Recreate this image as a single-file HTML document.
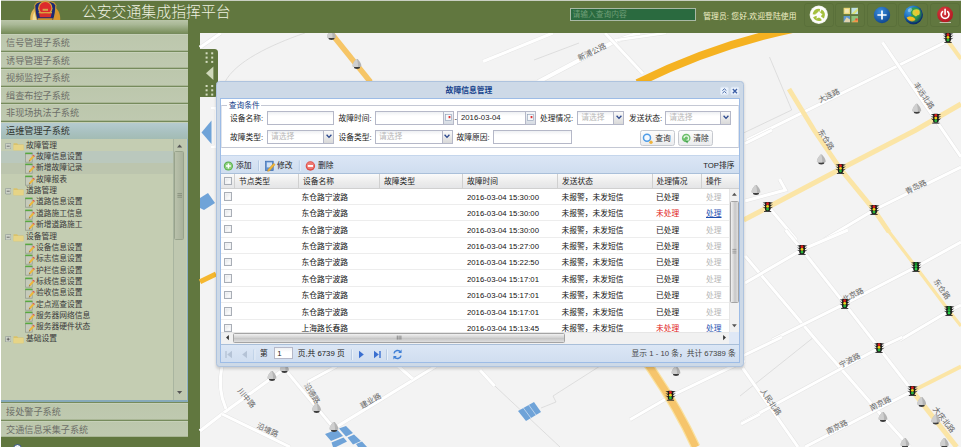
<!DOCTYPE html><html lang="zh"><head><meta charset="utf-8"><title>公安交通集成指挥平台</title><style>
*{margin:0;padding:0;box-sizing:border-box}
html,body{width:961px;height:447px;overflow:hidden;background:#61773f;font-family:"Liberation Sans","Noto Sans CJK SC",sans-serif}
.a{position:absolute}
.t{position:absolute;white-space:nowrap;line-height:1}
#hdr{left:0;top:0;width:961px;height:33px;background:#61773f}
#map{left:200px;top:33px;width:761px;height:414px;background:#f3f3f3;overflow:hidden}
.acc{position:absolute;left:1px;width:186.500px;height:17.6px;background:linear-gradient(#bcc7ac,#bfc9b0);border-top:1px solid #768b5c;box-shadow:inset 0 1px 0 #c6d0b8,inset 0 -1px 0 #a9b695}
.acc span{position:absolute;left:5px;top:5.1px;font-size:9.15px;line-height:1;color:#6d6f68;white-space:nowrap}
.tr{position:absolute;left:0;width:172px;height:11.36px}
.tr span{position:absolute;top:1.6px;font-size:7.75px;line-height:1;color:#3a3a3a;white-space:nowrap}
.lbl{position:absolute;font-size:7.75px;line-height:1;color:#222;white-space:nowrap}
.inp{position:absolute;height:14.600px;margin-top:-0.600px;border:1px solid #b5b8c8;background:linear-gradient(#eef0f3,#fff 4px);}
.ph{position:absolute;left:3px;top:2.4px;font-size:7.75px;line-height:1;color:#b8b8b8;white-space:nowrap}
.trg{position:absolute;right:-1px;top:-1px;width:11px;height:14px;border:1px solid #b5b8c8;background:linear-gradient(#fafafa,#d9d9d9)}
.row{position:absolute;left:0;width:510px;height:16.46px;border-bottom:1px solid #ededed;background:#fff}
.row span{position:absolute;top:5.5px;font-size:7.75px;line-height:1;color:#111;white-space:nowrap}
.cb{position:absolute;left:2.6px;top:4px;width:8.4px;height:8.4px;border:1px solid #a9aeb6;background:linear-gradient(135deg,#dfe2e5,#fbfbfb 70%);box-shadow:inset 0 0 0 1px #f1f2f4}
.hc{position:absolute;top:0;height:14px;border-right:1px solid #d0d0d0;}
.hc span{position:absolute;left:4px;top:3.9px;font-size:7.75px;line-height:1;color:#222;white-space:nowrap}
.rl{font-size:7.6px;fill:#666;font-family:"Liberation Sans","Noto Sans CJK SC",sans-serif}
</style></head><body>
<svg class="a" style="left:0;top:0" width="961" height="447" viewBox="0 0 961 447"><rect x="200" y="33" width="761" height="414" fill="#f3f3f3"/><path d="M305,33C270,45 235,62 225,82" stroke="#d4d4d4" fill="none" stroke-width="0.7"/><path d="M769.5,57L791.7,110L740,134.7" stroke="#d4d4d4" fill="none" stroke-width="0.7"/><path d="M740,396L814,337" stroke="#d4d4d4" fill="none" stroke-width="0.7"/><path d="M480,372L560,447M541,408L556,402L553,396L600,366" stroke="#d4d4d4" fill="none" stroke-width="0.7"/><path d="M534,60L579,43" stroke="#d4d4d4" fill="none" stroke-width="0.7"/><path d="M200,47.5L221,33" stroke="#e4e4e4" stroke-width="4.0" fill="none"/><path d="M200,47.5L221,33" stroke="#fff" stroke-width="3.0" fill="none"/><path d="M483,61.5L553,33" stroke="#e4e4e4" stroke-width="4.0" fill="none"/><path d="M483,61.5L553,33" stroke="#fff" stroke-width="3.0" fill="none"/><path d="M538,82L614,41.7L640,33" stroke="#e4e4e4" stroke-width="5.0" fill="none"/><path d="M538,82L614,41.7L640,33" stroke="#fff" stroke-width="4.0" fill="none"/><path d="M605,33L643,73.7" stroke="#e4e4e4" stroke-width="4.0" fill="none"/><path d="M605,33L643,73.7" stroke="#fff" stroke-width="3.0" fill="none"/><path d="M617,40L666,33" stroke="#e4e4e4" stroke-width="3.5" fill="none"/><path d="M617,40L666,33" stroke="#fff" stroke-width="2.5" fill="none"/><path d="M747,140L948,41" stroke="#e4e4e4" stroke-width="4.0" fill="none"/><path d="M747,140L948,41" stroke="#fff" stroke-width="3.0" fill="none"/><path d="M745,143.5L772,130" stroke="#e4e4e4" stroke-width="4.0" fill="none"/><path d="M745,143.5L772,130" stroke="#fff" stroke-width="3.0" fill="none"/><path d="M882.4,42.3L949.4,140L961,157" stroke="#e4e4e4" stroke-width="4.0" fill="none"/><path d="M882.4,42.3L949.4,140L961,157" stroke="#fff" stroke-width="3.0" fill="none"/><path d="M823.7,240L874,210L961,167" stroke="#e4e4e4" stroke-width="4.0" fill="none"/><path d="M823.7,240L874,210L961,167" stroke="#fff" stroke-width="3.0" fill="none"/><path d="M767,205L796.6,240L785.6,230" stroke="#e4e4e4" stroke-width="4.0" fill="none"/><path d="M767,205L796.6,240L785.6,230" stroke="#fff" stroke-width="3.0" fill="none"/><path d="M745,201L785.5,190L779.4,179" stroke="#e4e4e4" stroke-width="4.0" fill="none"/><path d="M745,201L785.5,190L779.4,179" stroke="#fff" stroke-width="3.0" fill="none"/><path d="M785.6,230L802,249.7L844.7,303.9L879,348L912.4,391" stroke="#e4e4e4" stroke-width="4.0" fill="none"/><path d="M785.6,230L802,249.7L844.7,303.9L879,348L912.4,391" stroke="#fff" stroke-width="3.0" fill="none"/><path d="M745,255.9L816,340L883,417L910,447" stroke="#e4e4e4" stroke-width="4.0" fill="none"/><path d="M745,255.9L816,340L883,417L910,447" stroke="#fff" stroke-width="3.0" fill="none"/><path d="M745,283L802,249.7L848,230" stroke="#e4e4e4" stroke-width="4.0" fill="none"/><path d="M745,283L802,249.7L848,230" stroke="#fff" stroke-width="3.0" fill="none"/><path d="M772,340L844.7,303.9L916,267L961,242" stroke="#e4e4e4" stroke-width="4.0" fill="none"/><path d="M772,340L844.7,303.9L916,267L961,242" stroke="#fff" stroke-width="3.0" fill="none"/><path d="M900,340L949,311L961,305" stroke="#e4e4e4" stroke-width="4.0" fill="none"/><path d="M900,340L949,311L961,305" stroke="#fff" stroke-width="3.0" fill="none"/><path d="M742.5,367.8L798,447" stroke="#e4e4e4" stroke-width="4.0" fill="none"/><path d="M742.5,367.8L798,447" stroke="#fff" stroke-width="3.0" fill="none"/><path d="M741,423L879,348L902.5,337" stroke="#e4e4e4" stroke-width="4.0" fill="none"/><path d="M741,423L879,348L902.5,337" stroke="#fff" stroke-width="3.0" fill="none"/><path d="M805,447L912.4,391" stroke="#e4e4e4" stroke-width="4.0" fill="none"/><path d="M805,447L912.4,391" stroke="#fff" stroke-width="3.0" fill="none"/><path d="M743.7,355.5L782,337" stroke="#e4e4e4" stroke-width="4.0" fill="none"/><path d="M743.7,355.5L782,337" stroke="#fff" stroke-width="3.0" fill="none"/><path d="M630,419.7L671,396L727.8,368.7L745,361" stroke="#e4e4e4" stroke-width="4.0" fill="none"/><path d="M630,419.7L671,396L727.8,368.7L745,361" stroke="#fff" stroke-width="3.0" fill="none"/><path d="M480,370L494.6,386" stroke="#e4e4e4" stroke-width="4.0" fill="none"/><path d="M480,370L494.6,386" stroke="#fff" stroke-width="3.0" fill="none"/><path d="M741,424L760,414" stroke="#e4e4e4" stroke-width="4.0" fill="none"/><path d="M741,424L760,414" stroke="#fff" stroke-width="3.0" fill="none"/><path d="M284.5,368.7L334,428.4" stroke="#e4e4e4" stroke-width="4.0" fill="none"/><path d="M284.5,368.7L334,428.4" stroke="#fff" stroke-width="3.0" fill="none"/><path d="M334,428.4L436,366" stroke="#e4e4e4" stroke-width="4.0" fill="none"/><path d="M334,428.4L436,366" stroke="#fff" stroke-width="3.0" fill="none"/><path d="M284.5,368.7L222,414L200,431" stroke="#e4e4e4" stroke-width="4.0" fill="none"/><path d="M284.5,368.7L222,414L200,431" stroke="#fff" stroke-width="3.0" fill="none"/><path d="M222,366C218,385 222,400 226,409" stroke="#e4e4e4" stroke-width="4.0" fill="none"/><path d="M222,366C218,385 222,400 226,409" stroke="#fff" stroke-width="3.0" fill="none"/><path d="M222,414L290,447" stroke="#e4e4e4" stroke-width="4.0" fill="none"/><path d="M222,414L290,447" stroke="#fff" stroke-width="3.0" fill="none"/><path d="M308,381.8L337,366" stroke="#e4e4e4" stroke-width="4.0" fill="none"/><path d="M308,381.8L337,366" stroke="#fff" stroke-width="3.0" fill="none"/><path d="M398,366L413,379" stroke="#e4e4e4" stroke-width="4.0" fill="none"/><path d="M398,366L413,379" stroke="#fff" stroke-width="3.0" fill="none"/><path d="M211,108L216,108L216,147L211,147" stroke="#e4e4e4" stroke-width="4.0" fill="none"/><path d="M211,108L216,108L216,147L211,147" stroke="#fff" stroke-width="3.0" fill="none"/><path d="M789,89L814,130L840.5,169L874,210L889,232" stroke="#fbe5a6" stroke-width="4.8" fill="none"/><path d="M887.7,230L916,267L949.3,311.3L961,326" stroke="#fbe5a6" stroke-width="3.2" fill="none"/><path d="M743.7,220L840.5,169L916,130L961,104" stroke="#fbe5a6" stroke-width="5.0" fill="none"/><path d="M948,41L961,59" stroke="#fbe5a6" stroke-width="4.0" fill="none"/><path d="M912.4,391L961,366.5" stroke="#fbe5a6" stroke-width="4.0" fill="none"/><path d="M912.4,391L956.7,447" stroke="#fbe5a6" stroke-width="5.0" fill="none"/><path d="M331,33L370.5,82" stroke="#f6c566" stroke-width="5.5" fill="none"/><path d="M200,281.7L216,273.9" stroke="#f5b72f" stroke-width="5.0" fill="none"/><path d="M637.4,83C690,57 740,40 792,29" stroke="#f5b221" stroke-width="8.0" fill="none"/><path d="M585,283C625,330 670,390 695.7,447" stroke="#fae2a0" stroke-width="9.5" fill="none"/><path d="M585,283C625,330 670,390 695.7,447" stroke="#f6c56c" stroke-width="7.0" fill="none"/><path d="M201.5,132.5L211.5,120.5L211.5,144z" fill="#6fa3d8"/><path d="M200,198L208,193L215,203L204,210L200,208z" fill="#6fa3d8"/><path d="M518,411L534,402L541,412L526,421z" fill="#6fa3d8"/><path d="M523.4,408L531,418.200M528.800,405L536,415" stroke="#e9f0f8" stroke-width=".6"/><path d="M325,434L337,429.5L343,436L331,441z M339,428.5L346,426L353,433L346,436.5z M331.500,442.500L343.500,437.500L347,441.500L336,447L333,447z M347.500,437.500L354,434.500L361,441L353,444.500z M356,444L362,441.500L367,447L358,447z" fill="#6fa3d8"/><text class="rl" x="592.0" y="54.7" text-anchor="middle" transform="rotate(-26 592.0 52.0)">新浦公路</text><text class="rl" x="829.0" y="98.4" text-anchor="middle" transform="rotate(-26 829.0 95.7)">大连路</text><text class="rl" x="924.0" y="98.4" text-anchor="middle" transform="rotate(56 924.0 95.7)">丰远北路</text><text class="rl" x="826.0" y="142.2" text-anchor="middle" transform="rotate(57 826.0 139.5)">东仓路</text><text class="rl" x="916.0" y="189.7" text-anchor="middle" transform="rotate(-27 916.0 187.0)">青岛路</text><text class="rl" x="853.0" y="297.7" text-anchor="middle" transform="rotate(-27 853.0 295.0)">北京路</text><text class="rl" x="942.0" y="291.7" text-anchor="middle" transform="rotate(55 942.0 289.0)">东仓路</text><text class="rl" x="849.6" y="363.1" text-anchor="middle" transform="rotate(-27 849.6 360.4)">宁波路</text><text class="rl" x="770.8" y="404.7" text-anchor="middle" transform="rotate(55 770.8 402.0)">人民北路</text><text class="rl" x="880.4" y="406.2" text-anchor="middle" transform="rotate(-27 880.4 403.5)">南京路</text><text class="rl" x="837.0" y="429.7" text-anchor="middle" transform="rotate(-27 837.0 427.0)">南京路</text><text class="rl" x="944.0" y="422.2" text-anchor="middle" transform="rotate(52 944.0 419.5)">大庆北路</text><text class="rl" x="246.6" y="400.7" text-anchor="middle" transform="rotate(50 246.6 398.0)">川中路</text><text class="rl" x="312.0" y="396.1" text-anchor="middle" transform="rotate(58 312.0 393.4)">沿德路</text><text class="rl" x="370.5" y="403.4" text-anchor="middle" transform="rotate(-30 370.5 400.7)">建业路</text><text class="rl" x="267.6" y="432.7" text-anchor="middle" transform="rotate(25 267.6 430.0)">沿塘路</text><g transform="translate(331.5,35.0)"><ellipse cx="0" cy="3.2" rx="3" ry="1.7" fill="#3c3c3c"/><path d="M-0.7,-5h1.4C1.6,-3.4 4.4,-1.6 4.4,2.2C3.4,3.4 -3.4,3.4 -4.4,2.2C-4.4,-1.6 -1.6,-3.4 -0.7,-5z" fill="#b4b4b4"/><path d="M-0.7,-5h.8C0.2,-3.4 1.2,-1.6 1,2.9C-1,3 -3.6,3 -4.4,2.2C-4.4,-1.6 -1.6,-3.4 -0.7,-5z" fill="#cfcfcf"/></g><g transform="translate(357.0,64.0)"><ellipse cx="0" cy="3.2" rx="3" ry="1.7" fill="#3c3c3c"/><path d="M-0.7,-5h1.4C1.6,-3.4 4.4,-1.6 4.4,2.2C3.4,3.4 -3.4,3.4 -4.4,2.2C-4.4,-1.6 -1.6,-3.4 -0.7,-5z" fill="#b4b4b4"/><path d="M-0.7,-5h.8C0.2,-3.4 1.2,-1.6 1,2.9C-1,3 -3.6,3 -4.4,2.2C-4.4,-1.6 -1.6,-3.4 -0.7,-5z" fill="#cfcfcf"/></g><g transform="translate(916.8,108.8)"><ellipse cx="0" cy="3.2" rx="3" ry="1.7" fill="#3c3c3c"/><path d="M-0.7,-5h1.4C1.6,-3.4 4.4,-1.6 4.4,2.2C3.4,3.4 -3.4,3.4 -4.4,2.2C-4.4,-1.6 -1.6,-3.4 -0.7,-5z" fill="#b4b4b4"/><path d="M-0.7,-5h.8C0.2,-3.4 1.2,-1.6 1,2.9C-1,3 -3.6,3 -4.4,2.2C-4.4,-1.6 -1.6,-3.4 -0.7,-5z" fill="#cfcfcf"/></g><g transform="translate(821.3,159.5)"><ellipse cx="0" cy="3.2" rx="3" ry="1.7" fill="#3c3c3c"/><path d="M-0.7,-5h1.4C1.6,-3.4 4.4,-1.6 4.4,2.2C3.4,3.4 -3.4,3.4 -4.4,2.2C-4.4,-1.6 -1.6,-3.4 -0.7,-5z" fill="#b4b4b4"/><path d="M-0.7,-5h.8C0.2,-3.4 1.2,-1.6 1,2.9C-1,3 -3.6,3 -4.4,2.2C-4.4,-1.6 -1.6,-3.4 -0.7,-5z" fill="#cfcfcf"/></g><g transform="translate(756.0,190.0)"><ellipse cx="0" cy="3.2" rx="3" ry="1.7" fill="#3c3c3c"/><path d="M-0.7,-5h1.4C1.6,-3.4 4.4,-1.6 4.4,2.2C3.4,3.4 -3.4,3.4 -4.4,2.2C-4.4,-1.6 -1.6,-3.4 -0.7,-5z" fill="#b4b4b4"/><path d="M-0.7,-5h.8C0.2,-3.4 1.2,-1.6 1,2.9C-1,3 -3.6,3 -4.4,2.2C-4.4,-1.6 -1.6,-3.4 -0.7,-5z" fill="#cfcfcf"/></g><g transform="translate(676.0,371.0)"><ellipse cx="0" cy="3.2" rx="3" ry="1.7" fill="#3c3c3c"/><path d="M-0.7,-5h1.4C1.6,-3.4 4.4,-1.6 4.4,2.2C3.4,3.4 -3.4,3.4 -4.4,2.2C-4.4,-1.6 -1.6,-3.4 -0.7,-5z" fill="#b4b4b4"/><path d="M-0.7,-5h.8C0.2,-3.4 1.2,-1.6 1,2.9C-1,3 -3.6,3 -4.4,2.2C-4.4,-1.6 -1.6,-3.4 -0.7,-5z" fill="#cfcfcf"/></g><g transform="translate(284.5,368.0)"><ellipse cx="0" cy="3.2" rx="3" ry="1.7" fill="#3c3c3c"/><path d="M-0.7,-5h1.4C1.6,-3.4 4.4,-1.6 4.4,2.2C3.4,3.4 -3.4,3.4 -4.4,2.2C-4.4,-1.6 -1.6,-3.4 -0.7,-5z" fill="#b4b4b4"/><path d="M-0.7,-5h.8C0.2,-3.4 1.2,-1.6 1,2.9C-1,3 -3.6,3 -4.4,2.2C-4.4,-1.6 -1.6,-3.4 -0.7,-5z" fill="#cfcfcf"/></g><g transform="translate(272.0,376.0)"><ellipse cx="0" cy="3.2" rx="3" ry="1.7" fill="#3c3c3c"/><path d="M-0.7,-5h1.4C1.6,-3.4 4.4,-1.6 4.4,2.2C3.4,3.4 -3.4,3.4 -4.4,2.2C-4.4,-1.6 -1.6,-3.4 -0.7,-5z" fill="#b4b4b4"/><path d="M-0.7,-5h.8C0.2,-3.4 1.2,-1.6 1,2.9C-1,3 -3.6,3 -4.4,2.2C-4.4,-1.6 -1.6,-3.4 -0.7,-5z" fill="#cfcfcf"/></g><g transform="translate(316.6,408.0)"><ellipse cx="0" cy="3.2" rx="3" ry="1.7" fill="#3c3c3c"/><path d="M-0.7,-5h1.4C1.6,-3.4 4.4,-1.6 4.4,2.2C3.4,3.4 -3.4,3.4 -4.4,2.2C-4.4,-1.6 -1.6,-3.4 -0.7,-5z" fill="#b4b4b4"/><path d="M-0.7,-5h.8C0.2,-3.4 1.2,-1.6 1,2.9C-1,3 -3.6,3 -4.4,2.2C-4.4,-1.6 -1.6,-3.4 -0.7,-5z" fill="#cfcfcf"/></g><g transform="translate(334.0,427.0)"><ellipse cx="0" cy="3.2" rx="3" ry="1.7" fill="#3c3c3c"/><path d="M-0.7,-5h1.4C1.6,-3.4 4.4,-1.6 4.4,2.2C3.4,3.4 -3.4,3.4 -4.4,2.2C-4.4,-1.6 -1.6,-3.4 -0.7,-5z" fill="#b4b4b4"/><path d="M-0.7,-5h.8C0.2,-3.4 1.2,-1.6 1,2.9C-1,3 -3.6,3 -4.4,2.2C-4.4,-1.6 -1.6,-3.4 -0.7,-5z" fill="#cfcfcf"/></g><g transform="translate(921.7,402.0)"><ellipse cx="0" cy="3.2" rx="3" ry="1.7" fill="#3c3c3c"/><path d="M-0.7,-5h1.4C1.6,-3.4 4.4,-1.6 4.4,2.2C3.4,3.4 -3.4,3.4 -4.4,2.2C-4.4,-1.6 -1.6,-3.4 -0.7,-5z" fill="#b4b4b4"/><path d="M-0.7,-5h.8C0.2,-3.4 1.2,-1.6 1,2.9C-1,3 -3.6,3 -4.4,2.2C-4.4,-1.6 -1.6,-3.4 -0.7,-5z" fill="#cfcfcf"/></g><g transform="translate(883.0,417.0)"><ellipse cx="0" cy="3.2" rx="3" ry="1.7" fill="#3c3c3c"/><path d="M-0.7,-5h1.4C1.6,-3.4 4.4,-1.6 4.4,2.2C3.4,3.4 -3.4,3.4 -4.4,2.2C-4.4,-1.6 -1.6,-3.4 -0.7,-5z" fill="#b4b4b4"/><path d="M-0.7,-5h.8C0.2,-3.4 1.2,-1.6 1,2.9C-1,3 -3.6,3 -4.4,2.2C-4.4,-1.6 -1.6,-3.4 -0.7,-5z" fill="#cfcfcf"/></g><g transform="translate(935.8,419.5)"><ellipse cx="0" cy="3.2" rx="3" ry="1.7" fill="#3c3c3c"/><path d="M-0.7,-5h1.4C1.6,-3.4 4.4,-1.6 4.4,2.2C3.4,3.4 -3.4,3.4 -4.4,2.2C-4.4,-1.6 -1.6,-3.4 -0.7,-5z" fill="#b4b4b4"/><path d="M-0.7,-5h.8C0.2,-3.4 1.2,-1.6 1,2.9C-1,3 -3.6,3 -4.4,2.2C-4.4,-1.6 -1.6,-3.4 -0.7,-5z" fill="#cfcfcf"/></g><g transform="translate(905.0,443.0)"><ellipse cx="0" cy="3.2" rx="3" ry="1.7" fill="#3c3c3c"/><path d="M-0.7,-5h1.4C1.6,-3.4 4.4,-1.6 4.4,2.2C3.4,3.4 -3.4,3.4 -4.4,2.2C-4.4,-1.6 -1.6,-3.4 -0.7,-5z" fill="#b4b4b4"/><path d="M-0.7,-5h.8C0.2,-3.4 1.2,-1.6 1,2.9C-1,3 -3.6,3 -4.4,2.2C-4.4,-1.6 -1.6,-3.4 -0.7,-5z" fill="#cfcfcf"/></g><g transform="translate(944.4,443.0)"><ellipse cx="0" cy="3.2" rx="3" ry="1.7" fill="#3c3c3c"/><path d="M-0.7,-5h1.4C1.6,-3.4 4.4,-1.6 4.4,2.2C3.4,3.4 -3.4,3.4 -4.4,2.2C-4.4,-1.6 -1.6,-3.4 -0.7,-5z" fill="#b4b4b4"/><path d="M-0.7,-5h.8C0.2,-3.4 1.2,-1.6 1,2.9C-1,3 -3.6,3 -4.4,2.2C-4.4,-1.6 -1.6,-3.4 -0.7,-5z" fill="#cfcfcf"/></g><g transform="translate(948.0,38.0)"><path d="M-5,-4.2l2.6,1v1.2l-2.6,-.6l2.6,1.8v1.2l-2.6,-.6l2.6,2v1h5.2v-1l2.6,-2l-2.6,.6v-1.2l2.6,-1.8l-2.6,.6v-1.2l2.6,-1l-2.6,-.6h-5.2z" fill="#1c1c1c"/><rect x="-2.5" y="-5" width="5" height="9" rx="1" fill="#1a1a1a"/><rect x="-3.6" y="4" width="7.2" height="0.9" fill="#2a2a2a"/><circle cx="0" cy="-3.3" r="1.45" fill="#d81e1e"/><circle cx="0" cy="-0.6" r="1.45" fill="#f0d21c"/><circle cx="0" cy="2.1" r="1.45" fill="#28b33a"/></g><g transform="translate(935.8,118.7)"><path d="M-5,-4.2l2.6,1v1.2l-2.6,-.6l2.6,1.8v1.2l-2.6,-.6l2.6,2v1h5.2v-1l2.6,-2l-2.6,.6v-1.2l2.6,-1.8l-2.6,.6v-1.2l2.6,-1l-2.6,-.6h-5.2z" fill="#1c1c1c"/><rect x="-2.5" y="-5" width="5" height="9" rx="1" fill="#1a1a1a"/><rect x="-3.6" y="4" width="7.2" height="0.9" fill="#2a2a2a"/><circle cx="0" cy="-3.3" r="1.45" fill="#d81e1e"/><circle cx="0" cy="-0.6" r="1.45" fill="#f0d21c"/><circle cx="0" cy="2.1" r="1.45" fill="#28b33a"/></g><g transform="translate(840.5,169.0)"><path d="M-5,-4.2l2.6,1v1.2l-2.6,-.6l2.6,1.8v1.2l-2.6,-.6l2.6,2v1h5.2v-1l2.6,-2l-2.6,.6v-1.2l2.6,-1.8l-2.6,.6v-1.2l2.6,-1l-2.6,-.6h-5.2z" fill="#1c1c1c"/><rect x="-2.5" y="-5" width="5" height="9" rx="1" fill="#1a1a1a"/><rect x="-3.6" y="4" width="7.2" height="0.9" fill="#2a2a2a"/><circle cx="0" cy="-3.3" r="1.45" fill="#d81e1e"/><circle cx="0" cy="-0.6" r="1.45" fill="#f0d21c"/><circle cx="0" cy="2.1" r="1.45" fill="#28b33a"/></g><g transform="translate(767.6,207.0)"><path d="M-5,-4.2l2.6,1v1.2l-2.6,-.6l2.6,1.8v1.2l-2.6,-.6l2.6,2v1h5.2v-1l2.6,-2l-2.6,.6v-1.2l2.6,-1.8l-2.6,.6v-1.2l2.6,-1l-2.6,-.6h-5.2z" fill="#1c1c1c"/><rect x="-2.5" y="-5" width="5" height="9" rx="1" fill="#1a1a1a"/><rect x="-3.6" y="4" width="7.2" height="0.9" fill="#2a2a2a"/><circle cx="0" cy="-3.3" r="1.45" fill="#d81e1e"/><circle cx="0" cy="-0.6" r="1.45" fill="#f0d21c"/><circle cx="0" cy="2.1" r="1.45" fill="#28b33a"/></g><g transform="translate(874.0,210.0)"><path d="M-5,-4.2l2.6,1v1.2l-2.6,-.6l2.6,1.8v1.2l-2.6,-.6l2.6,2v1h5.2v-1l2.6,-2l-2.6,.6v-1.2l2.6,-1.8l-2.6,.6v-1.2l2.6,-1l-2.6,-.6h-5.2z" fill="#1c1c1c"/><rect x="-2.5" y="-5" width="5" height="9" rx="1" fill="#1a1a1a"/><rect x="-3.6" y="4" width="7.2" height="0.9" fill="#2a2a2a"/><circle cx="0" cy="-3.3" r="1.45" fill="#d81e1e"/><circle cx="0" cy="-0.6" r="1.45" fill="#f0d21c"/><circle cx="0" cy="2.1" r="1.45" fill="#28b33a"/></g><g transform="translate(802.0,250.0)"><path d="M-5,-4.2l2.6,1v1.2l-2.6,-.6l2.6,1.8v1.2l-2.6,-.6l2.6,2v1h5.2v-1l2.6,-2l-2.6,.6v-1.2l2.6,-1.8l-2.6,.6v-1.2l2.6,-1l-2.6,-.6h-5.2z" fill="#1c1c1c"/><rect x="-2.5" y="-5" width="5" height="9" rx="1" fill="#1a1a1a"/><rect x="-3.6" y="4" width="7.2" height="0.9" fill="#2a2a2a"/><circle cx="0" cy="-3.3" r="1.45" fill="#d81e1e"/><circle cx="0" cy="-0.6" r="1.45" fill="#f0d21c"/><circle cx="0" cy="2.1" r="1.45" fill="#28b33a"/></g><g transform="translate(844.7,304.0)"><path d="M-5,-4.2l2.6,1v1.2l-2.6,-.6l2.6,1.8v1.2l-2.6,-.6l2.6,2v1h5.2v-1l2.6,-2l-2.6,.6v-1.2l2.6,-1.8l-2.6,.6v-1.2l2.6,-1l-2.6,-.6h-5.2z" fill="#1c1c1c"/><rect x="-2.5" y="-5" width="5" height="9" rx="1" fill="#1a1a1a"/><rect x="-3.6" y="4" width="7.2" height="0.9" fill="#2a2a2a"/><circle cx="0" cy="-3.3" r="1.45" fill="#d81e1e"/><circle cx="0" cy="-0.6" r="1.45" fill="#f0d21c"/><circle cx="0" cy="2.1" r="1.45" fill="#28b33a"/></g><g transform="translate(670.4,395.8)"><path d="M-5,-4.2l2.6,1v1.2l-2.6,-.6l2.6,1.8v1.2l-2.6,-.6l2.6,2v1h5.2v-1l2.6,-2l-2.6,.6v-1.2l2.6,-1.8l-2.6,.6v-1.2l2.6,-1l-2.6,-.6h-5.2z" fill="#1c1c1c"/><rect x="-2.5" y="-5" width="5" height="9" rx="1" fill="#1a1a1a"/><rect x="-3.6" y="4" width="7.2" height="0.9" fill="#2a2a2a"/><circle cx="0" cy="-3.3" r="1.45" fill="#d81e1e"/><circle cx="0" cy="-0.6" r="1.45" fill="#f0d21c"/><circle cx="0" cy="2.1" r="1.45" fill="#28b33a"/></g><g transform="translate(879.0,348.0)"><path d="M-5,-4.2l2.6,1v1.2l-2.6,-.6l2.6,1.8v1.2l-2.6,-.6l2.6,2v1h5.2v-1l2.6,-2l-2.6,.6v-1.2l2.6,-1.8l-2.6,.6v-1.2l2.6,-1l-2.6,-.6h-5.2z" fill="#1c1c1c"/><rect x="-2.5" y="-5" width="5" height="9" rx="1" fill="#1a1a1a"/><rect x="-3.6" y="4" width="7.2" height="0.9" fill="#2a2a2a"/><circle cx="0" cy="-3.3" r="1.45" fill="#d81e1e"/><circle cx="0" cy="-0.6" r="1.45" fill="#f0d21c"/><circle cx="0" cy="2.1" r="1.45" fill="#28b33a"/></g><g transform="translate(912.4,391.0)"><path d="M-5,-4.2l2.6,1v1.2l-2.6,-.6l2.6,1.8v1.2l-2.6,-.6l2.6,2v1h5.2v-1l2.6,-2l-2.6,.6v-1.2l2.6,-1.8l-2.6,.6v-1.2l2.6,-1l-2.6,-.6h-5.2z" fill="#1c1c1c"/><rect x="-2.5" y="-5" width="5" height="9" rx="1" fill="#1a1a1a"/><rect x="-3.6" y="4" width="7.2" height="0.9" fill="#2a2a2a"/><circle cx="0" cy="-3.3" r="1.45" fill="#d81e1e"/><circle cx="0" cy="-0.6" r="1.45" fill="#f0d21c"/><circle cx="0" cy="2.1" r="1.45" fill="#28b33a"/></g><g transform="translate(916.0,267.0)"><path d="M-5,-4.2l2.6,1v1.2l-2.6,-.6l2.6,1.8v1.2l-2.6,-.6l2.6,2v1h5.2v-1l2.6,-2l-2.6,.6v-1.2l2.6,-1.8l-2.6,.6v-1.2l2.6,-1l-2.6,-.6h-5.2z" fill="#1c1c1c"/><rect x="-2.5" y="-5" width="5" height="9" rx="1" fill="#1a1a1a"/><rect x="-3.6" y="4" width="7.2" height="0.9" fill="#2a2a2a"/><circle cx="0" cy="-3.3" r="1.45" fill="#168a2a"/><circle cx="0" cy="-0.6" r="1.45" fill="#22b53c"/><circle cx="0" cy="2.1" r="1.45" fill="#2bd24a"/></g><g transform="translate(949.0,311.0)"><path d="M-5,-4.2l2.6,1v1.2l-2.6,-.6l2.6,1.8v1.2l-2.6,-.6l2.6,2v1h5.2v-1l2.6,-2l-2.6,.6v-1.2l2.6,-1.8l-2.6,.6v-1.2l2.6,-1l-2.6,-.6h-5.2z" fill="#1c1c1c"/><rect x="-2.5" y="-5" width="5" height="9" rx="1" fill="#1a1a1a"/><rect x="-3.6" y="4" width="7.2" height="0.9" fill="#2a2a2a"/><circle cx="0" cy="-3.3" r="1.45" fill="#168a2a"/><circle cx="0" cy="-0.6" r="1.45" fill="#22b53c"/><circle cx="0" cy="2.1" r="1.45" fill="#2bd24a"/></g></svg>
<div class="a" id="hdr"></div>
<div class="a" style="left:0;top:0;width:961px;height:1px;background:#c9cfc2"></div>
<div class="a" style="left:0;top:0;width:1px;height:447px;background:#fff"></div>
<svg class="a" style="left:28px;top:0" width="36" height="20" viewBox="28 0 36 20"><path d="M30.3,20C30,15 31.5,10.5 35,8L37,20z" fill="#e3b65a"/><path d="M60.2,20C60.5,15 59,10.5 55.5,8L53.5,20z" fill="#d8962e"/><path d="M32.5,20C32.6,16 33.6,13 35.4,10.6L36.6,20z" fill="#f1dc9a"/><path d="M45.3,0.6C49,0.6 52.5,1.6 54.6,2.6L56.4,5.2C56.2,11 55.6,16 53.6,20L37,20C35,16 34.4,11 34.2,5.2L36,2.6C38.1,1.6 41.6,0.6 45.3,0.6z" fill="#c99a3a"/><path d="M45.3,1.6C48.8,1.6 51.9,2.5 53.9,3.4L55.3,5.5C55.1,11 54.6,16 52.8,20L37.8,20C36,16 35.5,11 35.3,5.5L36.7,3.4C38.7,2.5 41.8,1.6 45.3,1.6z" fill="#1b2a74"/><circle cx="45.3" cy="8.2" r="7.2" fill="#d8a640"/><circle cx="45.3" cy="8" r="6" fill="#dc2a2c"/><rect x="42.6" y="8.8" width="5.4" height="2" fill="#d8a24a"/><path d="M39,13.2h12.6l-.8,4h-11z" fill="#d8302c"/><rect x="38.6" y="12" width="13.4" height="1.3" fill="#d9a441"/><path d="M38,18.2h14.6v1.8h-14.6z" fill="#c9902e"/></svg>
<div class="t" style="left:81.8px;top:5.4px;font-size:14.9px;font-weight:300;color:#f0f2e2">公安交通集成指挥平台</div>
<div class="a" style="left:570px;top:7.5px;width:126px;height:13.5px;background:#2a6a3f;border:1px solid #a9b9a5"></div>
<div class="t" style="left:572.5px;top:10.6px;font-size:7.75px;color:#6f9f77">请输入查询内容</div>
<div class="t" style="left:703.2px;top:13.200px;font-size:7.75px;letter-spacing:.12px;color:#f3f1c8">管理员: 您好,欢迎登陆使用</div>
<div class="a" style="left:804px;top:3px;width:30px;height:24px;border:1px solid rgba(70,92,44,.25);border-radius:3px"></div>
<div class="a" style="left:835px;top:3px;width:30px;height:24px;border:1px solid rgba(70,92,44,.25);border-radius:3px"></div>
<div class="a" style="left:867px;top:3px;width:30px;height:24px;border:1px solid rgba(70,92,44,.25);border-radius:3px"></div>
<div class="a" style="left:898px;top:3px;width:30px;height:24px;border:1px solid rgba(70,92,44,.25);border-radius:3px"></div>
<div class="a" style="left:930px;top:3px;width:30px;height:24px;border:1px solid rgba(70,92,44,.25);border-radius:3px"></div>
<svg class="a" style="left:800px;top:0" width="161" height="33" viewBox="800 0 161 33"><defs><radialGradient id="gb" cx=".4" cy=".3" r=".8"><stop offset="0" stop-color="#3b8fe0"/><stop offset="1" stop-color="#0b3f86"/></radialGradient><radialGradient id="gr" cx=".4" cy=".3" r=".8"><stop offset="0" stop-color="#da3a40"/><stop offset="1" stop-color="#ad141e"/></radialGradient><radialGradient id="gs" cx=".4" cy=".36" r=".66"><stop offset=".62" stop-color="#0a2a66" stop-opacity="0"/><stop offset="1" stop-color="#0a2a66" stop-opacity=".85"/></radialGradient><radialGradient id="gg" cx=".32" cy=".28" r=".85"><stop offset="0" stop-color="#4aa6ea"/><stop offset=".5" stop-color="#1766b8"/><stop offset="1" stop-color="#082a60"/></radialGradient></defs><circle cx="818.8" cy="14.8" r="9.2" fill="#e9ebe2"/><circle cx="818.8" cy="14.7" r="8.5" fill="#fdfdfb"/><circle cx="818.8" cy="14.9" r="4.4" fill="none" stroke="#a5c03e" stroke-width="3.5" stroke-dasharray="7.300 1.915" transform="rotate(-62 818.8 14.9)"/><path d="M818.8,10.800l1.100,2.700l2.900,.4l-2.200,1.900l.6,2.900l-2.400,-1.500l-2.400,1.500l.6,-2.900l-2.200,-1.900l2.900,-.4z" fill="#fdfdfb"/><rect x="843.6" y="7.8" width="6.4" height="6.3" fill="#e9d77a"/><rect x="851.4" y="7.8" width="6.6" height="6.3" fill="#bfe0e6"/><rect x="843.6" y="16" width="6.4" height="6.2" fill="#5f97cf"/><rect x="851.4" y="16" width="6.6" height="6.2" fill="#8fc27a"/><rect x="844.8" y="9" width="4" height="3.8" fill="#f3e7b4"/><path d="M851.4,14.1l6.6,-6.3v3l-3.4,3.3z" fill="#d8e27a"/><path d="M843.6,22.2l3,-5l3.4,2.4v2.6z" fill="#dfd2ae"/><path d="M851.4,22.2l6.6,-4v4z" fill="#ef9a4a"/><rect x="855.4" y="18.4" width="2.2" height="2" fill="#e0503a"/><circle cx="882" cy="15" r="8.2" fill="url(#gb)"/><path d="M877.4,15h9.2M882,10.4v9.2" stroke="#fff" stroke-width="1.7"/><circle cx="913.4" cy="14.8" r="9.4" fill="url(#gg)"/><path d="M910.6,8.6c2.400,-1.600 5.600,-1.800 7.800,-.4c2,1.400 3.200,3.600 3.400,5.800c.2,2.400 -.8,4.800 -2.400,6.400c-1.400,1.200 -3.400,2 -5.200,2c-2.400,-.2 -4.800,-1.400 -6.200,-3.400c1,-1.800 2.600,-2.800 4,-3.400c-.8,-1 -1.400,-2.200 -1.200,-3.600c-.6,-1 -.8,-2.400 -.200,-3.400z" fill="#2f9a48" opacity=".92"/><path d="M913,10.400c1.800,-1.400 4.600,-1.600 6.200,-.4c.8,1.400 1,3.200 .2,4.600c-1,.8 -2,.4 -2.600,1.400c-.8,.6 -1.800,.2 -2.400,-.6c-1.200,-.2 -2,-1.200 -2,-2.400c-.2,-1 .0,-1.800 .6,-2.600z" fill="#d7d23a"/><path d="M915.600,10.800c1.200,-.4 2.600,-.2 3.200,.8c.2,1 0,2 -.8,2.600c-1,0 -2.200,-.8 -2.600,-1.800c-.2,-.6 -.2,-1.200 .2,-1.600z" fill="#f0c030"/><path d="M906.600,17.600c1.600,-1.400 4.400,-1.600 6.200,-.6c1,.8 2.200,1.200 2.600,2.400c-.6,1.400 -2.200,2.200 -4,2.200c-2,-.4 -3.800,-1.800 -4.800,-4z" fill="#f2bc22"/><circle cx="913.4" cy="14.8" r="9.4" fill="url(#gs)"/><ellipse cx="910" cy="10" rx="2.400" ry="1.700" fill="#bfe3fa" opacity=".5" transform="rotate(-35 910 10)"/><circle cx="945.1" cy="14.5" r="7.900" fill="url(#gr)"/><path d="M942.500,11.600a3.900,3.900 0 1 0 5.200,0" stroke="#fff" stroke-width="1.600" fill="none" stroke-linecap="round"/><path d="M945.1,9.400v5" stroke="#fff" stroke-width="1.600" stroke-linecap="round"/><rect x="939.600" y="22" width="11.400" height="0.800" fill="#efe3e3" opacity=".85"/></svg>
<div class="a" style="left:1px;top:20px;width:186.500px;height:13px;background:linear-gradient(#b9c5a8,#a9b896 35%,#7a8f5c)"></div>
<div class="acc" style="top:33.0px"><span>信号管理子系统</span></div>
<div class="acc" style="top:50.6px"><span>诱导管理子系统</span></div>
<div class="acc" style="top:68.2px"><span>视频监控子系统</span></div>
<div class="acc" style="top:85.8px"><span>缉查布控子系统</span></div>
<div class="acc" style="top:103.4px"><span>非现场执法子系统</span></div>
<div class="acc" style="top:121px;background:linear-gradient(#b7ccd2,#a9c1c0 55%,#a2bbb2);border-top-color:#74895a;height:18.6px"><span style="color:#30352f">运维管理子系统</span></div>
<div class="a" style="left:1px;top:138.6px;width:186.500px;height:263.6px;background:#c4cdb2;border:1px solid #8fb0c6;border-top:0;border-left:0;border-bottom:2.4px solid #86a9b9;overflow:hidden">
<div class="tr" style="top:1.50px;"><svg class="a" style="left:3.5px;top:2.6px" width="6.4" height="6.4" viewBox="0 0 9 9"><rect x=".5" y=".5" width="8" height="8" rx="1.5" fill="#cdd2c8" stroke="#8c9690"/><path d="M2.4,4.5h4.2" stroke="#444" stroke-width="1"/></svg><svg class="a" style="left:12.0px;top:0.8px" width="11" height="10" viewBox="0 0 11 10"><path d="M0.5,2.2h3.6l1,1.2h5.4v5.8h-10z" fill="#d9c26a"/><path d="M0.5,4h10v5.2h-10z" fill="#e6d486"/></svg><span style="left:25px">故障管理</span></div>
<div class="tr" style="top:12.86px;background:#bac8bd;"><svg class="a" style="left:23.5px;top:0.4px" width="10" height="11" viewBox="0 0 10 11"><rect x="0.6" y="1.8" width="6.6" height="8.4" fill="#c6cabb" stroke="#90978a" stroke-width=".7"/><rect x="0.2" y="0.6" width="7" height="1.5" fill="#57a83f"/><path d="M7,1.2l.8,-.8v1.600z" fill="#777"/><path d="M3.800,9.400l.5,-2l3.400,-3.800l1.500,1.300l-3.500,3.900z" fill="#edb73a"/><path d="M7.700,3.600l.7,-.8l1.500,1.300l-.7,.8z" fill="#dd5150"/><path d="M3.800,9.400l.4,-1.500l1.100,1z" fill="#7a6a4a"/></svg><span style="left:35px">故障信息设置</span></div>
<div class="tr" style="top:24.22px;background:#bcc5ae;"><svg class="a" style="left:23.5px;top:0.4px" width="10" height="11" viewBox="0 0 10 11"><rect x="0.6" y="1.8" width="6.6" height="8.4" fill="#c6cabb" stroke="#90978a" stroke-width=".7"/><rect x="0.2" y="0.6" width="7" height="1.5" fill="#57a83f"/><path d="M7,1.2l.8,-.8v1.600z" fill="#777"/><path d="M3.800,9.400l.5,-2l3.400,-3.800l1.500,1.300l-3.500,3.900z" fill="#edb73a"/><path d="M7.700,3.600l.7,-.8l1.500,1.300l-.7,.8z" fill="#dd5150"/><path d="M3.800,9.400l.4,-1.500l1.100,1z" fill="#7a6a4a"/></svg><span style="left:35px">新增故障记录</span></div>
<div class="tr" style="top:35.58px;"><svg class="a" style="left:23.5px;top:0.4px" width="10" height="11" viewBox="0 0 10 11"><rect x="0.6" y="1.8" width="6.6" height="8.4" fill="#c6cabb" stroke="#90978a" stroke-width=".7"/><rect x="0.2" y="0.6" width="7" height="1.5" fill="#57a83f"/><path d="M7,1.2l.8,-.8v1.600z" fill="#777"/><path d="M3.800,9.400l.5,-2l3.400,-3.800l1.500,1.300l-3.500,3.900z" fill="#edb73a"/><path d="M7.700,3.600l.7,-.8l1.500,1.300l-.7,.8z" fill="#dd5150"/><path d="M3.800,9.400l.4,-1.500l1.100,1z" fill="#7a6a4a"/></svg><span style="left:35px">故障报表</span></div>
<div class="tr" style="top:46.94px;"><svg class="a" style="left:3.5px;top:2.6px" width="6.4" height="6.4" viewBox="0 0 9 9"><rect x=".5" y=".5" width="8" height="8" rx="1.5" fill="#cdd2c8" stroke="#8c9690"/><path d="M2.4,4.5h4.2" stroke="#444" stroke-width="1"/></svg><svg class="a" style="left:12.0px;top:0.8px" width="11" height="10" viewBox="0 0 11 10"><path d="M0.5,2.2h3.6l1,1.2h5.4v5.8h-10z" fill="#d9c26a"/><path d="M0.5,4h10v5.2h-10z" fill="#e6d486"/></svg><span style="left:25px">道路管理</span></div>
<div class="tr" style="top:58.30px;"><svg class="a" style="left:23.5px;top:0.4px" width="10" height="11" viewBox="0 0 10 11"><rect x="0.6" y="1.8" width="6.6" height="8.4" fill="#c6cabb" stroke="#90978a" stroke-width=".7"/><rect x="0.2" y="0.6" width="7" height="1.5" fill="#57a83f"/><path d="M7,1.2l.8,-.8v1.600z" fill="#777"/><path d="M3.800,9.400l.5,-2l3.400,-3.800l1.500,1.300l-3.500,3.900z" fill="#edb73a"/><path d="M7.700,3.600l.7,-.8l1.500,1.300l-.7,.8z" fill="#dd5150"/><path d="M3.800,9.400l.4,-1.500l1.100,1z" fill="#7a6a4a"/></svg><span style="left:35px">道路信息设置</span></div>
<div class="tr" style="top:69.66px;"><svg class="a" style="left:23.5px;top:0.4px" width="10" height="11" viewBox="0 0 10 11"><rect x="0.6" y="1.8" width="6.6" height="8.4" fill="#c6cabb" stroke="#90978a" stroke-width=".7"/><rect x="0.2" y="0.6" width="7" height="1.5" fill="#57a83f"/><path d="M7,1.2l.8,-.8v1.600z" fill="#777"/><path d="M3.800,9.400l.5,-2l3.400,-3.800l1.500,1.300l-3.500,3.900z" fill="#edb73a"/><path d="M7.700,3.600l.7,-.8l1.500,1.300l-.7,.8z" fill="#dd5150"/><path d="M3.800,9.400l.4,-1.500l1.100,1z" fill="#7a6a4a"/></svg><span style="left:35px">道路施工信息</span></div>
<div class="tr" style="top:81.02px;"><svg class="a" style="left:23.5px;top:0.4px" width="10" height="11" viewBox="0 0 10 11"><rect x="0.6" y="1.8" width="6.6" height="8.4" fill="#c6cabb" stroke="#90978a" stroke-width=".7"/><rect x="0.2" y="0.6" width="7" height="1.5" fill="#57a83f"/><path d="M7,1.2l.8,-.8v1.600z" fill="#777"/><path d="M3.800,9.400l.5,-2l3.400,-3.800l1.500,1.300l-3.500,3.900z" fill="#edb73a"/><path d="M7.700,3.600l.7,-.8l1.500,1.300l-.7,.8z" fill="#dd5150"/><path d="M3.800,9.400l.4,-1.500l1.100,1z" fill="#7a6a4a"/></svg><span style="left:35px">新增道路施工</span></div>
<div class="tr" style="top:92.38px;"><svg class="a" style="left:3.5px;top:2.6px" width="6.4" height="6.4" viewBox="0 0 9 9"><rect x=".5" y=".5" width="8" height="8" rx="1.5" fill="#cdd2c8" stroke="#8c9690"/><path d="M2.4,4.5h4.2" stroke="#444" stroke-width="1"/></svg><svg class="a" style="left:12.0px;top:0.8px" width="11" height="10" viewBox="0 0 11 10"><path d="M0.5,2.2h3.6l1,1.2h5.4v5.8h-10z" fill="#d9c26a"/><path d="M0.5,4h10v5.2h-10z" fill="#e6d486"/></svg><span style="left:25px">设备管理</span></div>
<div class="tr" style="top:103.74px;"><svg class="a" style="left:23.5px;top:0.4px" width="10" height="11" viewBox="0 0 10 11"><rect x="0.6" y="1.8" width="6.6" height="8.4" fill="#c6cabb" stroke="#90978a" stroke-width=".7"/><rect x="0.2" y="0.6" width="7" height="1.5" fill="#57a83f"/><path d="M7,1.2l.8,-.8v1.600z" fill="#777"/><path d="M3.800,9.400l.5,-2l3.400,-3.800l1.500,1.300l-3.500,3.900z" fill="#edb73a"/><path d="M7.700,3.600l.7,-.8l1.500,1.300l-.7,.8z" fill="#dd5150"/><path d="M3.800,9.400l.4,-1.500l1.100,1z" fill="#7a6a4a"/></svg><span style="left:35px">设备信息设置</span></div>
<div class="tr" style="top:115.10px;"><svg class="a" style="left:23.5px;top:0.4px" width="10" height="11" viewBox="0 0 10 11"><rect x="0.6" y="1.8" width="6.6" height="8.4" fill="#c6cabb" stroke="#90978a" stroke-width=".7"/><rect x="0.2" y="0.6" width="7" height="1.5" fill="#57a83f"/><path d="M7,1.2l.8,-.8v1.600z" fill="#777"/><path d="M3.800,9.400l.5,-2l3.400,-3.800l1.500,1.300l-3.500,3.900z" fill="#edb73a"/><path d="M7.700,3.600l.7,-.8l1.500,1.300l-.7,.8z" fill="#dd5150"/><path d="M3.800,9.400l.4,-1.500l1.100,1z" fill="#7a6a4a"/></svg><span style="left:35px">标志信息设置</span></div>
<div class="tr" style="top:126.46px;"><svg class="a" style="left:23.5px;top:0.4px" width="10" height="11" viewBox="0 0 10 11"><rect x="0.6" y="1.8" width="6.6" height="8.4" fill="#c6cabb" stroke="#90978a" stroke-width=".7"/><rect x="0.2" y="0.6" width="7" height="1.5" fill="#57a83f"/><path d="M7,1.2l.8,-.8v1.600z" fill="#777"/><path d="M3.800,9.400l.5,-2l3.400,-3.800l1.500,1.300l-3.500,3.900z" fill="#edb73a"/><path d="M7.700,3.600l.7,-.8l1.500,1.300l-.7,.8z" fill="#dd5150"/><path d="M3.800,9.400l.4,-1.500l1.100,1z" fill="#7a6a4a"/></svg><span style="left:35px">护栏信息设置</span></div>
<div class="tr" style="top:137.82px;"><svg class="a" style="left:23.5px;top:0.4px" width="10" height="11" viewBox="0 0 10 11"><rect x="0.6" y="1.8" width="6.6" height="8.4" fill="#c6cabb" stroke="#90978a" stroke-width=".7"/><rect x="0.2" y="0.6" width="7" height="1.5" fill="#57a83f"/><path d="M7,1.2l.8,-.8v1.600z" fill="#777"/><path d="M3.800,9.400l.5,-2l3.400,-3.800l1.500,1.300l-3.500,3.900z" fill="#edb73a"/><path d="M7.700,3.600l.7,-.8l1.500,1.300l-.7,.8z" fill="#dd5150"/><path d="M3.800,9.400l.4,-1.500l1.100,1z" fill="#7a6a4a"/></svg><span style="left:35px">标线信息设置</span></div>
<div class="tr" style="top:149.18px;"><svg class="a" style="left:23.5px;top:0.4px" width="10" height="11" viewBox="0 0 10 11"><rect x="0.6" y="1.8" width="6.6" height="8.4" fill="#c6cabb" stroke="#90978a" stroke-width=".7"/><rect x="0.2" y="0.6" width="7" height="1.5" fill="#57a83f"/><path d="M7,1.2l.8,-.8v1.600z" fill="#777"/><path d="M3.800,9.400l.5,-2l3.400,-3.800l1.500,1.300l-3.500,3.900z" fill="#edb73a"/><path d="M7.700,3.600l.7,-.8l1.500,1.300l-.7,.8z" fill="#dd5150"/><path d="M3.800,9.400l.4,-1.500l1.100,1z" fill="#7a6a4a"/></svg><span style="left:35px">验收信息设置</span></div>
<div class="tr" style="top:160.54px;"><svg class="a" style="left:23.5px;top:0.4px" width="10" height="11" viewBox="0 0 10 11"><rect x="0.6" y="1.8" width="6.6" height="8.4" fill="#c6cabb" stroke="#90978a" stroke-width=".7"/><rect x="0.2" y="0.6" width="7" height="1.5" fill="#57a83f"/><path d="M7,1.2l.8,-.8v1.600z" fill="#777"/><path d="M3.800,9.400l.5,-2l3.400,-3.800l1.500,1.300l-3.500,3.900z" fill="#edb73a"/><path d="M7.700,3.600l.7,-.8l1.500,1.300l-.7,.8z" fill="#dd5150"/><path d="M3.800,9.400l.4,-1.500l1.100,1z" fill="#7a6a4a"/></svg><span style="left:35px">定点巡查设置</span></div>
<div class="tr" style="top:171.90px;"><svg class="a" style="left:23.5px;top:0.4px" width="10" height="11" viewBox="0 0 10 11"><rect x="0.6" y="1.8" width="6.6" height="8.4" fill="#c6cabb" stroke="#90978a" stroke-width=".7"/><rect x="0.2" y="0.6" width="7" height="1.5" fill="#57a83f"/><path d="M7,1.2l.8,-.8v1.600z" fill="#777"/><path d="M3.800,9.400l.5,-2l3.400,-3.800l1.500,1.300l-3.500,3.900z" fill="#edb73a"/><path d="M7.700,3.600l.7,-.8l1.500,1.300l-.7,.8z" fill="#dd5150"/><path d="M3.800,9.400l.4,-1.500l1.100,1z" fill="#7a6a4a"/></svg><span style="left:35px">服务器网络信息</span></div>
<div class="tr" style="top:183.26px;"><svg class="a" style="left:23.5px;top:0.4px" width="10" height="11" viewBox="0 0 10 11"><rect x="0.6" y="1.8" width="6.6" height="8.4" fill="#c6cabb" stroke="#90978a" stroke-width=".7"/><rect x="0.2" y="0.6" width="7" height="1.5" fill="#57a83f"/><path d="M7,1.2l.8,-.8v1.600z" fill="#777"/><path d="M3.800,9.400l.5,-2l3.400,-3.800l1.500,1.300l-3.500,3.900z" fill="#edb73a"/><path d="M7.700,3.600l.7,-.8l1.500,1.300l-.7,.8z" fill="#dd5150"/><path d="M3.800,9.400l.4,-1.500l1.100,1z" fill="#7a6a4a"/></svg><span style="left:35px">服务器硬件状态</span></div>
<div class="tr" style="top:194.62px;"><svg class="a" style="left:3.5px;top:2.6px" width="6.4" height="6.4" viewBox="0 0 9 9"><rect x=".5" y=".5" width="8" height="8" rx="1.5" fill="#cdd2c8" stroke="#8c9690"/><path d="M2.4,4.5h4.2" stroke="#444" stroke-width="1"/><path d="M4.5,2.4v4.2" stroke="#444" stroke-width="1"/></svg><svg class="a" style="left:12.0px;top:0.8px" width="11" height="10" viewBox="0 0 11 10"><path d="M0.5,2.2h3.6l1,1.2h5.4v5.8h-10z" fill="#d9c26a"/><path d="M0.5,4h10v5.2h-10z" fill="#e6d486"/></svg><span style="left:25px">基础设置</span></div>
<div class="a" style="left:171.5px;top:0;width:13px;height:261px;background:#bfc8b0;border-left:1px solid #a9b5a0"></div>
<div class="a" style="left:173.4px;top:12.7px;width:10px;height:88.4px;background:linear-gradient(90deg,#b9c1ab,#a9b29c);border:1px solid #98a38c;border-radius:1.5px"></div>
<svg class="a" style="left:171.5px;top:0" width="13" height="261" viewBox="0 0 13 261"><path d="M4,8.4l2.6,-3l2.6,3z" fill="#555"/><path d="M4,252l2.6,3l2.6,-3z" fill="#555"/><path d="M4.4,54.6h4.6M4.4,56.4h4.6M4.4,58.2h4.6" stroke="#6f7766" stroke-width=".6"/></svg>
</div>
<div class="acc" style="top:402.4px"><span>接处警子系统</span></div>
<div class="acc" style="top:420px;height:17.4px"><span>交通信息采集子系统</span></div>
<div class="a" style="left:12.5px;top:444.4px;width:9.600px;height:9.600px;border-radius:5px;background:#eef2f6;border:1px solid #2b4a7a"></div>
<div class="a" style="left:200px;top:48.8px;width:18px;height:48.4px;background:#61773f;border-radius:0 3.5px 3.5px 0"></div>
<svg class="a" style="left:0;top:0" width="230" height="110" viewBox="0 0 230 110"><rect x="205.6" y="52.3" width="2" height="2" fill="#d4dcc0"/><rect x="211.2" y="52.3" width="2" height="2" fill="#d4dcc0"/><rect x="205.6" y="56.6" width="2" height="2" fill="#d4dcc0"/><rect x="211.2" y="56.6" width="2" height="2" fill="#d4dcc0"/><rect x="205.6" y="60.9" width="2" height="2" fill="#d4dcc0"/><rect x="211.2" y="60.9" width="2" height="2" fill="#d4dcc0"/><rect x="205.6" y="85.0" width="2" height="2" fill="#d4dcc0"/><rect x="211.2" y="85.0" width="2" height="2" fill="#d4dcc0"/><rect x="205.6" y="89.3" width="2" height="2" fill="#d4dcc0"/><rect x="211.2" y="89.3" width="2" height="2" fill="#d4dcc0"/><rect x="205.6" y="93.6" width="2" height="2" fill="#d4dcc0"/><rect x="211.2" y="93.6" width="2" height="2" fill="#d4dcc0"/><path d="M213.4,66.6v13.4l-7.4,-6.7z" fill="#cfd8ba"/></svg>
<div class="a" style="left:216px;top:81px;width:528px;height:286px;background:#cdd9e7;border:1px solid #aec3de;border-radius:3.5px;box-shadow:0 1.500px 3px rgba(0,0,0,.17)"></div>
<div class="t" style="left:445.6px;top:86.8px;font-size:7.8px;font-weight:bold;color:#15428b">故障信息管理</div>
<svg class="a" style="left:718px;top:84px" width="24" height="14" viewBox="718 84 24 14"><rect x="720.6" y="87.2" width="7.6" height="7.6" rx="1" fill="#ecf3fc" stroke="#dde8f6" stroke-width=".9"/><path d="M722.4,90.6l2,-1.8l2,1.8M722.4,93.2l2,-1.8l2,1.8" stroke="#4468a8" stroke-width="1" fill="none"/><rect x="731" y="87.2" width="7.8" height="7.6" rx="1" fill="#ecf3fc" stroke="#dde8f6" stroke-width=".9"/><path d="M732.8,89l4.2,4.2M737,89l-4.2,4.2" stroke="#3c5fa6" stroke-width="1.3"/></svg>
<div class="a" style="left:220px;top:98px;width:520px;height:265px;background:#fff;border:1px solid #9dbce6;overflow:hidden">
<div class="a" style="left:-0.2px;top:6.4px;width:518px;height:42.6px;border:1px solid #c4c8d4;border-left-color:#dfe3ea;border-right-color:#dfe3ea"></div>
<div class="t" style="left:6.2px;top:2.8px;font-size:7.75px;color:#15428b;background:#fff;padding:0 1.6px">查询条件</div>
<div class="lbl" style="left:9.0px;top:16.0px">设备名称:</div>
<div class="inp" style="left:46.0px;top:12.4px;width:67.4px"></div>
<div class="lbl" style="left:117.5px;top:16.0px">故障时间:</div>
<div class="inp" style="left:154.0px;top:12.4px;width:78.6px"><span class="trg" style="background:linear-gradient(#f4f6f9,#d6dbe3)"><svg class="a" style="left:1.4px;top:2.4px" width="7" height="7" viewBox="0 0 7 7"><rect x=".4" y=".4" width="6.2" height="6.2" fill="#f7f9fb" stroke="#8d9db5" stroke-width=".6"/><rect x="3.6" y="2" width="1.8" height="2.2" fill="#d33"/></svg></span></div>
<div class="lbl" style="left:233.4px;top:15.8px">-</div>
<div class="inp" style="left:236.0px;top:12.4px;width:78.6px"><span class="ph" style="color:#222">2016-03-04</span><span class="trg" style="background:linear-gradient(#f4f6f9,#d6dbe3)"><svg class="a" style="left:1.4px;top:2.4px" width="7" height="7" viewBox="0 0 7 7"><rect x=".4" y=".4" width="6.2" height="6.2" fill="#f7f9fb" stroke="#8d9db5" stroke-width=".6"/><rect x="3.6" y="2" width="1.8" height="2.2" fill="#d33"/></svg></span></div>
<div class="lbl" style="left:319.0px;top:16.0px">处理情况:</div>
<div class="inp" style="left:356.3px;top:12.4px;width:47.0px"><span class="ph">请选择</span><span class="trg"><svg class="a" style="left:1.6px;top:3.6px" width="6" height="5" viewBox="0 0 6 5"><path d="M.6,.8l2.4,2.6l2.4,-2.6" stroke="#28458c" stroke-width="1.3" fill="none"/></svg></span></div>
<div class="lbl" style="left:408.0px;top:16.0px">发送状态:</div>
<div class="inp" style="left:444.2px;top:12.4px;width:66.2px"><span class="ph">请选择</span><span class="trg"><svg class="a" style="left:1.6px;top:3.6px" width="6" height="5" viewBox="0 0 6 5"><path d="M.6,.8l2.4,2.6l2.4,-2.6" stroke="#28458c" stroke-width="1.3" fill="none"/></svg></span></div>
<div class="lbl" style="left:9.0px;top:35.0px">故障类型:</div>
<div class="inp" style="left:46.0px;top:31.4px;width:67.4px"><span class="ph">请选择</span><span class="trg"><svg class="a" style="left:1.6px;top:3.6px" width="6" height="5" viewBox="0 0 6 5"><path d="M.6,.8l2.4,2.6l2.4,-2.6" stroke="#28458c" stroke-width="1.3" fill="none"/></svg></span></div>
<div class="lbl" style="left:117.5px;top:35.0px">设备类型:</div>
<div class="inp" style="left:154.0px;top:31.4px;width:77.6px"><span class="ph">请选择</span><span class="trg"><svg class="a" style="left:1.6px;top:3.6px" width="6" height="5" viewBox="0 0 6 5"><path d="M.6,.8l2.4,2.6l2.4,-2.6" stroke="#28458c" stroke-width="1.3" fill="none"/></svg></span></div>
<div class="lbl" style="left:235.5px;top:35.0px">故障原因:</div>
<div class="inp" style="left:272.3px;top:31.4px;width:79.0px"></div>
<div class="a" style="left:418.6px;top:31.0px;width:35.2px;height:16px;border:1px solid #c6c9cf;border-radius:2.5px;background:linear-gradient(#fcfcfc,#ebecee)"><svg class="a" style="left:1.6px;top:1.8px" width="12" height="12" viewBox="0 0 12 12"><circle cx="5" cy="4.8" r="3.5" fill="#f4f9ff" stroke="#4f9ce6" stroke-width="1.5"/><circle cx="9" cy="9.2" r="1.700" fill="#f0b43c"/></svg><span class="t" style="left:14.6px;top:3.6px;font-size:7.75px;color:#333">查询</span></div>
<div class="a" style="left:456.6px;top:31.0px;width:35.2px;height:16px;border:1px solid #c6c9cf;border-radius:2.5px;background:linear-gradient(#fcfcfc,#ebecee)"><svg class="a" style="left:2.6px;top:2.2px" width="11" height="11" viewBox="0 0 11 11"><circle cx="5.2" cy="5" r="4.300" fill="#6cbf6a"/><path d="M3,5.200a2.300,2.300 0 1 1 2.300,2.300" stroke="#e6f6e4" stroke-width="1.300" fill="none"/><path d="M6.400,10.400l-2.200,-2.600l2.800,-.4z" fill="#3f9e4a"/></svg><span class="t" style="left:14.6px;top:3.6px;font-size:7.75px;color:#333">清除</span></div>
<div class="a" style="left:0.0px;top:56.0px;width:518px;height:19px;background:linear-gradient(#dbe6f5,#cfddef);border-top:1px solid #c5d6ec;border-bottom:1px solid #a9bfd9"></div>
<svg class="a" style="left:0.0px;top:56.6px" width="120" height="18" viewBox="221 155 120 18"><circle cx="228.4" cy="165" r="4.6" fill="#57b04a"/><circle cx="228.4" cy="165" r="3.6" fill="#8fd07f"/><path d="M226,165h4.8M228.4,162.6v4.8" stroke="#fff" stroke-width="1.4"/><path d="M258.6,159.4v10.6M299.4,159.4v10.6" stroke="#a7bfdc" stroke-width=".8"/><path d="M259.4,159.4v10.6M300.2,159.4v10.6" stroke="#f3f7fc" stroke-width=".8"/><rect x="265.6" y="160.2" width="7.6" height="9.4" fill="#5d8fd0" stroke="#3d6cb0" stroke-width=".7"/><rect x="266.8" y="161.4" width="5.2" height="5" fill="#cfe0f5"/><path d="M268,168.6l5.6,-6.4l1.6,1.4l-5.4,6.2l-2.2,.6z" fill="#f0b63a" stroke="#c98a1c" stroke-width=".4"/><circle cx="310.4" cy="165" r="4.7" fill="#dd4b45"/><circle cx="310.4" cy="164.6" r="3.7" fill="#ee7a72"/><rect x="307.8" y="164" width="5.2" height="1.9" fill="#fff"/></svg>
<div class="lbl" style="left:15.0px;top:62.8px">添加</div>
<div class="lbl" style="left:56.0px;top:62.8px">修改</div>
<div class="lbl" style="left:97.0px;top:62.8px">删除</div>
<div class="lbl" style="left:482.2px;top:62.8px">TOP排序</div>
<div class="a" style="left:0.0px;top:75.0px;width:518px;height:15px;z-index:2;background:linear-gradient(#fafafa,#ececec 60%,#e4e5e7);border-bottom:1px solid #d0d0d0">
<div class="hc" style="left:0.0px;width:14.0px"><span></span></div>
<div class="hc" style="left:14.0px;width:64.0px"><span>节点类型</span></div>
<div class="hc" style="left:78.0px;width:81.0px"><span>设备名称</span></div>
<div class="hc" style="left:159.0px;width:83.0px"><span>故障类型</span></div>
<div class="hc" style="left:242.0px;width:95.0px"><span>故障时间</span></div>
<div class="hc" style="left:337.0px;width:94.6px"><span>发送状态</span></div>
<div class="hc" style="left:431.6px;width:49.4px"><span>处理情况</span></div>
<div class="hc" style="left:481.0px;width:38.0px"><span>操作</span></div>
<div class="cb" style="left:2.6px;top:3px"></div>
</div>
<div class="a" style="left:0.0px;top:89.2px;width:508px;height:145px;overflow:hidden;background:#fff">
<div class="row" style="top:0.0px"><i class="cb"></i><span style="left:80.6px">东仓路宁波路</span><span style="left:246px">2016-03-04 15:30:00</span><span style="left:340.6px">未报警，未发短信</span><span style="left:435.1px">已处理</span><span style="left:485px;color:#b5b5b5">处理</span></div>
<div class="row" style="top:16.5px"><i class="cb"></i><span style="left:80.6px">东仓路宁波路</span><span style="left:246px">2016-03-04 15:30:00</span><span style="left:340.6px">未报警，未发短信</span><span style="left:435.1px;color:#e02020">未处理</span><span style="left:485px;color:#1f4fb0;text-decoration:underline">处理</span></div>
<div class="row" style="top:32.9px"><i class="cb"></i><span style="left:80.6px">东仓路宁波路</span><span style="left:246px">2016-03-04 15:30:00</span><span style="left:340.6px">未报警，未发短信</span><span style="left:435.1px">已处理</span><span style="left:485px;color:#b5b5b5">处理</span></div>
<div class="row" style="top:49.4px"><i class="cb"></i><span style="left:80.6px">东仓路宁波路</span><span style="left:246px">2016-03-04 15:27:00</span><span style="left:340.6px">未报警，未发短信</span><span style="left:435.1px">已处理</span><span style="left:485px;color:#b5b5b5">处理</span></div>
<div class="row" style="top:65.8px"><i class="cb"></i><span style="left:80.6px">东仓路宁波路</span><span style="left:246px">2016-03-04 15:22:50</span><span style="left:340.6px">未报警，未发短信</span><span style="left:435.1px">已处理</span><span style="left:485px;color:#b5b5b5">处理</span></div>
<div class="row" style="top:82.3px"><i class="cb"></i><span style="left:80.6px">东仓路宁波路</span><span style="left:246px">2016-03-04 15:17:01</span><span style="left:340.6px">未报警，未发短信</span><span style="left:435.1px">已处理</span><span style="left:485px;color:#b5b5b5">处理</span></div>
<div class="row" style="top:98.8px"><i class="cb"></i><span style="left:80.6px">东仓路宁波路</span><span style="left:246px">2016-03-04 15:17:01</span><span style="left:340.6px">未报警，未发短信</span><span style="left:435.1px">已处理</span><span style="left:485px;color:#b5b5b5">处理</span></div>
<div class="row" style="top:115.2px"><i class="cb"></i><span style="left:80.6px">东仓路宁波路</span><span style="left:246px">2016-03-04 15:17:01</span><span style="left:340.6px">未报警，未发短信</span><span style="left:435.1px">已处理</span><span style="left:485px;color:#b5b5b5">处理</span></div>
<div class="row" style="top:131.7px"><i class="cb"></i><span style="left:80.6px">上海路长春路</span><span style="left:246px">2016-03-04 15:13:45</span><span style="left:340.6px">未报警，未发短信</span><span style="left:435.1px;color:#e02020">未处理</span><span style="left:485px;color:#1f4fb0;text-decoration:underline">处理</span></div>
</div>
<div class="a" style="left:508.0px;top:89.2px;width:11px;height:145px;background:#f1f1f1;border-left:1px solid #e6e6e6"></div>
<div class="a" style="left:509.0px;top:102.0px;width:9px;height:101.6px;background:linear-gradient(90deg,#f0f0f0,#d2d2d2 45%,#c6c6c6 55%,#dedede);border:1px solid #a4a4a4;border-radius:1.5px"></div>
<svg class="a" style="left:508.2px;top:89.2px" width="10.6" height="145" viewBox="0 0 10.6 145"><path d="M3,7.6l2.4,-2.8l2.4,2.8z" fill="#555"/><path d="M3,136.4l2.4,2.8l2.4,-2.8z" fill="#555"/><path d="M3.4,61.4h4M3.4,63.2h4M3.4,65h4" stroke="#777" stroke-width=".6"/></svg>
<div class="a" style="left:0.0px;top:233.2px;width:518px;height:11.4px;background:#f1f1f1;border-top:1px solid #e6e6e6"></div>
<div class="a" style="left:12.0px;top:234.2px;width:332px;height:9.4px;background:linear-gradient(#f0f0f0,#d2d2d2 45%,#c6c6c6 55%,#dedede);border:1px solid #a4a4a4;border-radius:1.5px"></div>
<div class="a" style="left:508.0px;top:233.2px;width:11px;height:11.4px;background:#dfe8f6"></div>
<svg class="a" style="left:0.0px;top:233.4px" width="520" height="11.2" viewBox="0 0 520 11.2"><path d="M7.6,3l-2.8,2.6l2.8,2.6z" fill="#333"/><path d="M502.4,3l2.8,2.6l-2.8,2.6z" fill="#333"/><path d="M176.200,3.6v4M178,3.6v4M179.800,3.6v4" stroke="#666" stroke-width=".7"/></svg>
<div class="a" style="left:0.0px;top:244.6px;width:518px;height:20px;background:linear-gradient(#dbe6f5,#cfddef);border-top:1px solid #a9bfd9"></div>
<svg class="a" style="left:0.0px;top:245.6px" width="200" height="18" viewBox="221 344 200 18"><path d="M226,350v7" stroke="#b5c3d6" stroke-width="1.4"/><path d="M232,349.8v7.4l-4.8,-3.7z" fill="#b5c3d6"/><path d="M247,349.8v7.4l-4.8,-3.7z" fill="#b5c3d6"/><path d="M254,348.4v10.6M351.6,348.4v10.6M386.6,348.4v10.6" stroke="#a7bfdc" stroke-width=".8"/><path d="M254.8,348.4v10.6M352.4,348.4v10.6M387.4,348.4v10.6" stroke="#f3f7fc" stroke-width=".8"/><path d="M359,349.8v7.4l4.8,-3.7z" fill="#3a6fd0"/><path d="M374,349.8v7.4l4.8,-3.7z" fill="#3a6fd0"/><path d="M380,350v7" stroke="#3a6fd0" stroke-width="1.4"/><path d="M394,352.4a3.6,3.6 0 0 1 6.6,-1.2M401,354.6a3.6,3.6 0 0 1 -6.6,1.2" stroke="#3f7fd6" stroke-width="1.5" fill="none"/><path d="M401.6,348.6v3.4h-3.4z M393.4,358.4v-3.4h3.4z" fill="#3f7fd6"/></svg>
<div class="lbl" style="left:39.0px;top:251.2px">第</div>
<div class="inp" style="left:52.8px;top:248.6px;width:18.8px;height:12.4px"><span class="ph" style="color:#222;left:2.4px;top:1.8px">1</span></div>
<div class="lbl" style="left:76.7px;top:251.2px">页,共 6739 页</div>
<div class="lbl" style="left:auto;right:3.2px;top:251.4px;color:#444">显示 1 - 10 条，共计 67389 条</div>
</div>
</body></html>
